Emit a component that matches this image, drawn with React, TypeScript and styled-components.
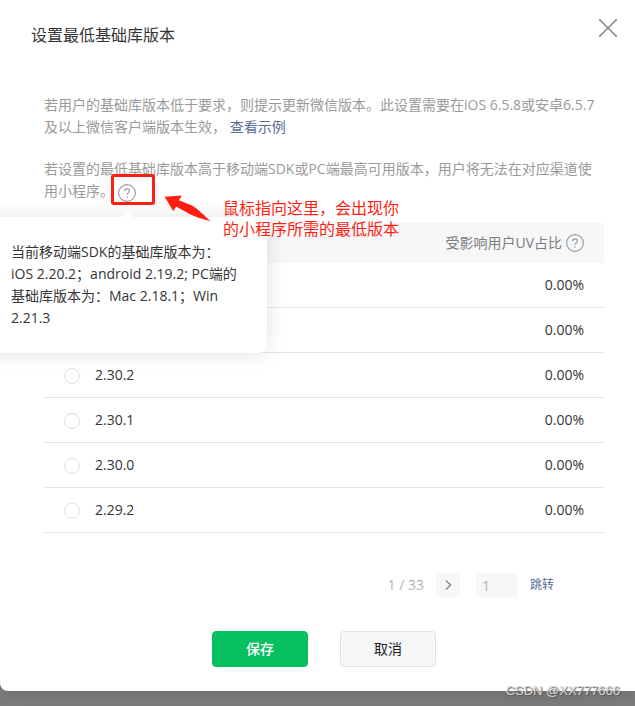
import React, { useState } from 'react';
import styled, { createGlobalStyle } from 'styled-components';

const GlobalStyle = createGlobalStyle`
  *, *::before, *::after { box-sizing: border-box; }
  html, body { margin: 0; overflow-x: hidden; }
  body {
    background: #7c7c7c;
    color: #353535;
    font-family: "Open Sans", "Noto Sans CJK SC", sans-serif;
    font-size: 14px;
    line-height: 22px;
  }
  button, input { font: inherit; }
`;

const Page = styled.div`
  position: relative;
  padding-bottom: 15px;
  overflow: hidden;
`;

const Dialog = styled.section`
  background: #fff;
  border-bottom-left-radius: 8px;
  box-shadow: 0 1px 20px rgba(0, 0, 0, 0.15);
`;

const Header = styled.header`
  display: flex;
  justify-content: space-between;
  align-items: flex-start;
  padding: 18px 17px 0 31px;
`;

const Title = styled.h1`
  margin: 6px 0 0;
  font-size: 16px;
  font-weight: 400;
  line-height: 22px;
`;

const IconButton = styled.button`
  display: flex;
  padding: 0;
  border: 0;
  background: none;
  color: #7d7d7d;
  cursor: pointer;
`;

const Body = styled.div`
  padding: 48px 31px 24px 44px;
`;

const Hint = styled.p`
  margin: 0 0 20px;
  color: #9a9a9a;
`;

const Link = styled.a`
  color: #576b95;
  text-decoration: none;
`;

const HelpAnchor = styled.span`
  position: relative;
  display: inline-block;
  width: 18px;
  height: 18px;
  margin: 2px 0 0 4px;
  vertical-align: middle;
`;

const Help = styled.button`
  display: block;
  width: 18px;
  height: 18px;
  padding: 0;
  border: 0;
  background: none;
  color: #9a9a9a;
  cursor: pointer;
`;

const Tooltip = styled.span`
  position: absolute;
  z-index: 1;
  top: 33px;
  left: 50%;
  width: 280px;
  margin-left: -140px;
  padding: 24px;
  border-radius: 8px;
  background: #fff;
  box-shadow: 0 1px 20px rgba(0, 0, 0, 0.12);
  color: #353535;
  white-space: nowrap;

  &::before {
    content: '';
    position: absolute;
    top: -6px;
    left: 50%;
    margin-left: -6px;
    border: 6px solid transparent;
    border-top: 0;
    border-bottom-color: #fff;
  }
`;

const Highlight = styled.span`
  position: absolute;
  z-index: 2;
  top: -10px;
  left: -7px;
  width: 44px;
  height: 31px;
  border: 3px solid #ff1f12;
  border-radius: 3px;
  pointer-events: none;
`;

const Pointer = styled.svg`
  position: absolute;
  z-index: 2;
  top: 11px;
  left: 46px;
`;

const Note = styled.span`
  position: absolute;
  z-index: 2;
  top: 14px;
  left: 105px;
  color: #ff1f12;
  font-size: 16px;
  line-height: 21px;
  white-space: nowrap;
`;

const Table = styled.table`
  width: 100%;
  margin-top: 21px;
  border-collapse: separate;
  border-spacing: 0;
`;

const HeadCell = styled.th<{ $end?: boolean }>`
  height: 40px;
  padding: 0 20px;
  background: #f6f7f9;
  color: #7d7d7d;
  font-weight: 400;
  text-align: ${(p) => (p.$end ? 'right' : 'left')};
`;

const HeadLabel = styled.span`
  display: flex;
  justify-content: flex-end;
  align-items: center;
  gap: 4px;
`;

const Cell = styled.td<{ $end?: boolean }>`
  height: 45px;
  padding: 0 20px;
  border-bottom: 1px solid #e4e4e4;
  text-align: ${(p) => (p.$end ? 'right' : 'left')};
`;

const Choice = styled.label`
  display: flex;
  align-items: center;
  gap: 15px;
`;

const Radio = styled.input`
  appearance: none;
  width: 16px;
  height: 16px;
  margin: 2px 0 0;
  border: 1px solid #e1e1e1;
  border-radius: 50%;
  background: #fff;

  &:checked { border: 5px solid #07c160; }
`;

const Pager = styled.nav`
  display: flex;
  justify-content: flex-end;
  align-items: center;
  gap: 12px;
  margin-top: 40px;
  padding-right: 50px;
  color: #b2b2b2;
`;

const NextButton = styled.button`
  display: flex;
  justify-content: center;
  align-items: center;
  width: 24px;
  height: 24px;
  margin-right: 4px;
  padding: 0;
  border: 0;
  border-radius: 2px;
  background: #f6f7f9;
  color: #7d7d7d;
  cursor: pointer;
`;

const PageInput = styled.input`
  width: 42px;
  height: 24px;
  padding: 0 6px;
  border: 0;
  border-radius: 2px;
  background: #f6f7f9;
  color: #b2b2b2;
`;

const JumpLink = styled(Link)`
  font-size: 12px;
`;

const Actions = styled.footer`
  display: flex;
  justify-content: center;
  gap: 32px;
  margin-top: 34px;
`;

const ActionButton = styled.button<{ $primary?: boolean }>`
  width: 96px;
  height: 36px;
  padding: 0;
  border: 1px solid ${(p) => (p.$primary ? '#07c160' : '#dfe1e5')};
  border-radius: 4px;
  background: ${(p) => (p.$primary ? '#07c160' : '#f6f7f9')};
  color: ${(p) => (p.$primary ? '#fff' : '#1c1c1c')};
  font-weight: ${(p) => (p.$primary ? 500 : 400)};
  cursor: pointer;
`;

const Watermark = styled.div`
  position: absolute;
  right: 15px;
  bottom: 6px;
  color: #d9d9d9;
  font-family: "Liberation Sans", sans-serif;
  font-size: 13px;
  line-height: 18px;
  text-shadow: 1px 1px 1px #555;
`;

const HelpIcon = () => (
  <svg width="18" height="18" viewBox="0 0 18 18" fill="none" stroke="currentColor" display="block" aria-hidden="true">
    <circle cx="9" cy="9" r="8.4" strokeWidth="1.1" />
    <path d="M6.6 7.2C6.6 5.7 7.6 4.9 9 4.9s2.4.8 2.4 2.1c0 1.6-2.3 1.8-2.3 3.8" strokeWidth="1.1" />
    <circle cx="9.1" cy="12.9" r=".75" fill="currentColor" stroke="none" />
  </svg>
);

const rows = [
  { id: 'latest', label: '' },
  { id: 'previous', label: '' },
  { id: '2.30.2', label: '2.30.2' },
  { id: '2.30.1', label: '2.30.1' },
  { id: '2.30.0', label: '2.30.0' },
  { id: '2.29.2', label: '2.29.2' },
];

export default function App() {
  const [selected, setSelected] = useState('');
  const [page, setPage] = useState('1');

  return (
    <Page>
      <GlobalStyle />
      <Dialog role="dialog" aria-labelledby="dialog-title">
        <Header>
          <Title id="dialog-title">设置最低基础库版本</Title>
          <IconButton type="button" aria-label="关闭">
            <svg width="20" height="20" viewBox="0 0 20 20" fill="none" stroke="currentColor" strokeWidth="1.4">
              <path d="M1.2 1.2l17.6 17.6M18.8 1.2L1.2 18.8" />
            </svg>
          </IconButton>
        </Header>
        <Body>
          <Hint>
            若用户的基础库版本低于要求，则提示更新微信版本。此设置需要在iOS 6.5.8或安卓6.5.7及以上微信客户端版本生效， <Link href="#example">查看示例</Link>
          </Hint>
          <Hint as="div">
            若设置的最低基础库版本高于移动端SDK或PC端最高可用版本，用户将无法在对应渠道使用小程序。
            <HelpAnchor>
              <Help type="button" aria-label="说明" aria-describedby="sdk-tip">
                <HelpIcon />
              </Help>
              <Tooltip role="tooltip" id="sdk-tip">
                当前移动端SDK的基础库版本为：
                <br />
                iOS 2.20.2；android 2.19.2; PC端的
                <br />
                基础库版本为：Mac 2.18.1；Win
                <br />
                2.21.3
              </Tooltip>
              <Highlight />
              <Pointer width="48" height="28" viewBox="0 0 48 28" fill="#ff1f12" aria-hidden="true">
                <path d="M.6 1.8L17.8.6 15 5.3 28 10.6Q33 13.4 46.4 26.2 34 23 26 19.2L12 11.6 9.4 16.2Z" />
              </Pointer>
              <Note>
                鼠标指向这里，会出现你
                <br />
                的小程序所需的最低版本
              </Note>
            </HelpAnchor>
          </Hint>
          <Table>
            <thead>
              <tr>
                <HeadCell as="td" />
                <HeadCell scope="col" $end>
                  <HeadLabel>
                    受影响用户UV占比
                    <Help type="button" aria-label="占比说明">
                      <HelpIcon />
                    </Help>
                  </HeadLabel>
                </HeadCell>
              </tr>
            </thead>
            <tbody>
              {rows.map((row) => (
                <tr key={row.id}>
                  <Cell>
                    <Choice>
                      <Radio
                        type="radio"
                        name="version"
                        aria-label={row.label || '版本'}
                        checked={selected === row.id}
                        onChange={() => setSelected(row.id)}
                      />
                      {row.label}
                    </Choice>
                  </Cell>
                  <Cell $end>0.00%</Cell>
                </tr>
              ))}
            </tbody>
          </Table>
          <Pager aria-label="分页">
            <span>1 / 33</span>
            <NextButton type="button" aria-label="下一页">
              <svg width="12" height="12" viewBox="0 0 12 12" fill="none" stroke="currentColor" strokeWidth="1.2">
                <path d="M4 1.5L8.5 6 4 10.5" />
              </svg>
            </NextButton>
            <PageInput aria-label="页码" value={page} onChange={(e) => setPage(e.target.value)} />
            <JumpLink href="#jump">跳转</JumpLink>
          </Pager>
          <Actions>
            <ActionButton type="button" $primary>保存</ActionButton>
            <ActionButton type="button">取消</ActionButton>
          </Actions>
        </Body>
      </Dialog>
      <Watermark>CSDN @XX777666</Watermark>
    </Page>
  );
}
